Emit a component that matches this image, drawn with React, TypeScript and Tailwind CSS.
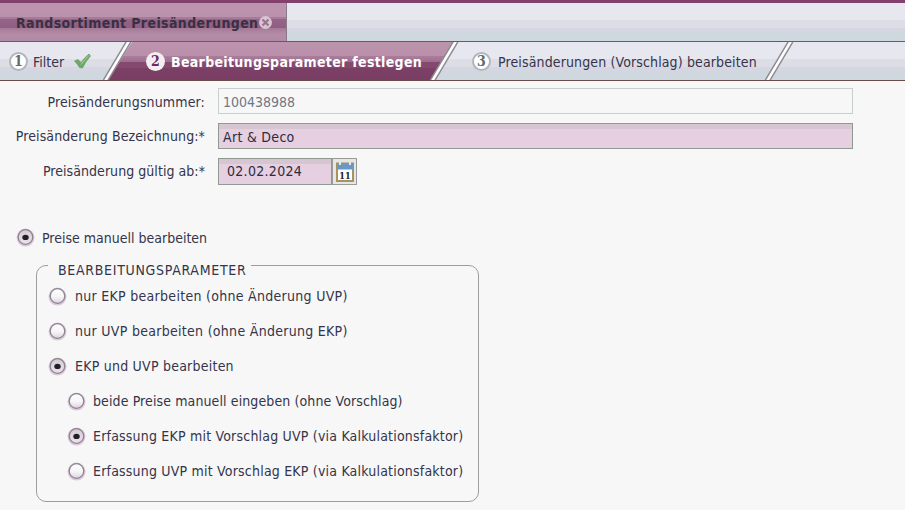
import React from "react";

const font = "font-['DejaVu_Sans',sans-serif] [font-stretch:condensed]";

function Radio({ on }: { on?: boolean }) {
  const id = on ? "rOn" : "rOff";
  return (
    <span className="block w-[19px] h-[19px] shrink-0">
      <svg width="19" height="19" viewBox="0 0 19 19">
        <defs>
          <linearGradient id={id} x1="0" y1="0" x2="0" y2="1">
            <stop offset="0" stopColor={on ? "#d4c8d2" : "#ffffff"} />
            <stop offset="0.55" stopColor={on ? "#e4d8e2" : "#f6f4f6"} />
            <stop offset="1" stopColor={on ? "#ece2ea" : "#dcd4dc"} />
          </linearGradient>
        </defs>
        <circle cx="9.5" cy="9.6" r="9" fill="#dcc8da" />
        <circle cx="9.5" cy="9" r="7.3" fill={`url(#${id})`} stroke="#8a8490" strokeWidth="1.3" />
        {on && <ellipse cx="9.5" cy="9.4" rx="3.2" ry="2.6" fill="#1f1f26" />}
      </svg>
    </span>
  );
}

function Opt({ on, label, className, textClass }: { on?: boolean; label: string; className: string; textClass: string }) {
  return (
    <div className={`flex items-center h-[35px] ${className}`}>
      <Radio on={on} />
      <span className={`whitespace-nowrap ${textClass}`}>{label}</span>
    </div>
  );
}

function Num({ n, active }: { n: string; active?: boolean }) {
  return (
    <span
      className={`flex items-center justify-center w-[19px] h-[19px] rounded-full shrink-0 font-bold text-[14px] font-['DejaVu_Serif',serif] ${
        active ? "bg-[#f4eef2] text-[#6e2a5c]" : "bg-white text-[#666a70] border-2 border-[#b4b4bc]"
      }`}
    >
      {n}
    </span>
  );
}

function Slash({ left }: { left: number }) {
  return (
    <svg className="absolute top-0" style={{ left }} width="32" height="38" viewBox="0 0 32 38">
      <line x1="3.2" y1="39" x2="27" y2="-1" stroke="#8f8a92" strokeWidth="5.5" />
      <line x1="3.2" y1="39" x2="27" y2="-1" stroke="#ffffff" strokeWidth="2.6" />
    </svg>
  );
}

const light =
  "bg-[linear-gradient(to_bottom,#e7e7f0_0,#e7e7f0_17px,#dddde5_17px,#dddde5_25px,#d6d6e3_25px,#d6d6e3_29px,#cfd8de_29px)]";
const purple =
  "bg-[linear-gradient(to_bottom,#bd93ae_0,#ba8faa_14px,#aa7e9c_14px,#9c6e8e_20px,#85496f_20px,#85496f_26px,#7c3f66_26px,#7a3d64_100%)]";

export default function App() {
  return (
    <div className={`w-[905px] h-[510px] overflow-hidden bg-[#f7f7f7] text-[14px] text-[#34344a] ${font}`}>
      <div className="h-[3px] bg-[#84406c]" />
      <div className={`h-[38px] ${light}`}>
        <div className="w-[287px] h-[38px] flex items-center pl-[16px] border-r border-[#8a7a88] bg-[linear-gradient(to_bottom,#bd94af_0,#bb91ac_14px,#a67a98_14px,#a67a98_16px,#93658a_16px,#8f5f82_25px,#a47896_25px,#b48ca8_31px,#b08aa6_100%)]">
          <span className="pt-[2px] font-bold text-[#3a3042] whitespace-nowrap text-[14px] tracking-[0.38px]">Randsortiment Preisänderungen</span>
          <span className="ml-[1px] flex items-center justify-center w-[13px] h-[13px] rounded-full bg-[#d8c4d2]">
            <svg width="9" height="9" viewBox="0 0 9 9">
              <path d="M1.5 1.5 L7.5 7.5 M7.5 1.5 L1.5 7.5" stroke="#96768c" strokeWidth="2.2" />
            </svg>
          </span>
        </div>
      </div>
      <div className={`relative h-[40px] flex border-t border-b border-t-[#6b5a66] border-b-[#6b4a4a] ${light}`}>
        <div className="w-[108px] flex items-center pl-[9px]">
          <Num n="1" />
          <span className="ml-[5px] pt-[2px]">Filter</span>
          <svg className="ml-[10px]" width="17" height="16" viewBox="0 0 17 16">
            <path d="M0.5 8 L4 6.5 L7 9.5 Q11 4 15 1 L16.5 3 Q11.5 8.5 8.5 15 L5.5 14.5 Q3.5 11 0.5 8 Z" fill="#69ab62" stroke="#6f9a68" strokeWidth="0.7" />
            <path d="M7 11.5 Q11 6 15 2.5" stroke="#aad8a0" strokeWidth="1" fill="none" />
          </svg>
        </div>
        <div className={`w-[347px] flex items-center pl-[38px] [clip-path:polygon(24px_0,100%_0,calc(100%-24px)_100%,0_100%)] ${purple}`}>
          <Num n="2" active />
          <span className="ml-[6px] pt-[2px] font-bold text-white whitespace-nowrap tracking-[0.32px]">Bearbeitungsparameter festlegen</span>
        </div>
        <div className="flex items-center pl-[17px]">
          <Num n="3" />
          <span className="ml-[7px] pt-[2px] whitespace-nowrap tracking-[0.13px]">Preisänderungen (Vorschlag) bearbeiten</span>
        </div>
        <Slash left={102} />
        <Slash left={429} />
        <Slash left={764} />
      </div>

      <div className="grid grid-cols-[205px_635px] gap-x-[13px] gap-y-[9px] mt-[7px] items-center">
        <div className="text-right whitespace-nowrap pt-[2px] tracking-[0.14px]">Preisänderungsnummer:</div>
        <div className="h-[26px] border border-[#c8d0ce] flex items-center pl-[4px] pt-[2px] text-[#6e7886]">100438988</div>
        <div className="text-right whitespace-nowrap tracking-[0.11px]">Preisänderung Bezeichnung:*</div>
        <div className="h-[26px] border border-[#8f9a90] flex items-center pl-[4px] pt-[2px] bg-[linear-gradient(to_bottom,#d6c6d2_0,#d6c6d2_5px,#e6cfe0_5px)] text-[#2c2c3c] tracking-[0.3px]">Art &amp; Deco</div>
        <div className="text-right whitespace-nowrap tracking-[0.05px]">Preisänderung gültig ab:*</div>
        <div className="flex h-[27px]">
          <div className="w-[114px] border border-[#8f9a90] flex items-center pl-[8px] bg-[linear-gradient(to_bottom,#d6c6d2_0,#d6c6d2_5px,#e6cfe0_5px)] text-[#2c2c3c] tracking-[0.3px]">02.02.2024</div>
          <div className="w-[25px] border border-[#9a9a98] bg-[#e6e6e6] flex items-center justify-center">
            <svg width="20" height="22" viewBox="0 0 20 22">
              <rect x="1" y="1.5" width="18" height="19.5" fill="#a8925e" />
              <rect x="2" y="2.5" width="16" height="6" fill="#6a98c4" />
              <rect x="3" y="8.5" width="14" height="10.5" fill="#ffffff" />
              <rect x="4" y="1" width="2" height="3" fill="#e8e8e8" />
              <rect x="14" y="1" width="2" height="3" fill="#e8e8e8" />
              <text x="10" y="17.5" textAnchor="middle" fontSize="9" fontWeight="700" fontFamily="'DejaVu Serif',serif" fill="#222222">11</text>
            </svg>
          </div>
        </div>
      </div>

      <Opt on label="Preise manuell bearbeiten" className="ml-[16px] mt-[35px]" textClass="ml-[7px] pt-[2px]" />

      <fieldset className="ml-[36px] mt-[-2px] w-[443px] h-[249px] border border-[#9a9f9a] rounded-[10px] pl-[11px] m-0 p-0">
        <legend className="pl-[10px] pr-[5px] pt-[10px] leading-[14px] whitespace-nowrap tracking-[0.7px]">BEARBEITUNGSPARAMETER</legend>
        <div className="mt-[2px]">
          <Opt label="nur EKP bearbeiten (ohne Änderung UVP)" className="" textClass="ml-[8px] tracking-[0.29px]" />
          <Opt label="nur UVP bearbeiten (ohne Änderung EKP)" className="" textClass="ml-[8px] tracking-[0.29px]" />
          <Opt on label="EKP und UVP bearbeiten" className="" textClass="ml-[8px] tracking-[0.23px]" />
          <Opt label="beide Preise manuell eingeben (ohne Vorschlag)" className="ml-[19px]" textClass="ml-[7px] tracking-[0.11px]" />
          <Opt on label="Erfassung EKP mit Vorschlag UVP (via Kalkulationsfaktor)" className="ml-[19px]" textClass="ml-[7px] tracking-[0.2px]" />
          <Opt label="Erfassung UVP mit Vorschlag EKP (via Kalkulationsfaktor)" className="ml-[19px]" textClass="ml-[7px] tracking-[0.2px]" />
        </div>
      </fieldset>
    </div>
  );
}
